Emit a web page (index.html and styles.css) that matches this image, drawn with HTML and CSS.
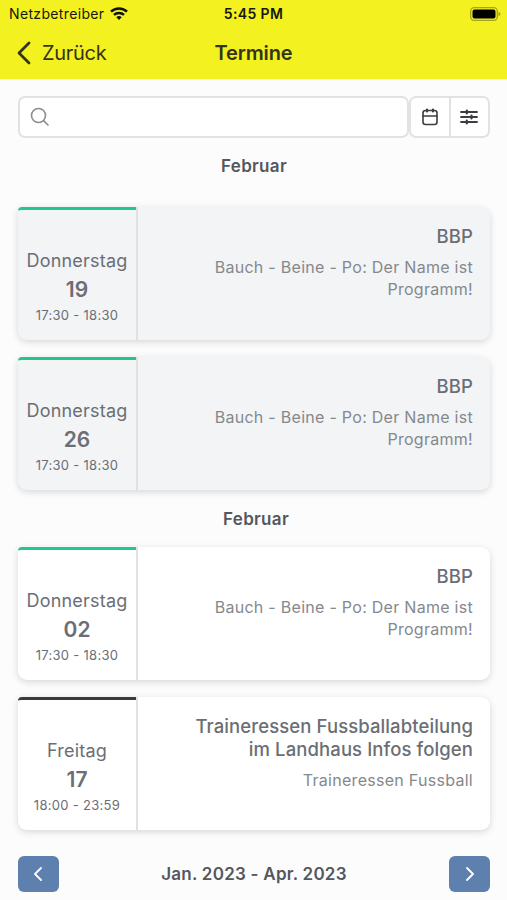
FILE: index.html
```html
<!doctype html>
<html lang="de">

<head>
    <meta charset="utf-8">
    <meta name="viewport" content="width=device-width, initial-scale=1, viewport-fit=cover">
    <title>Termine</title>
    <link rel="stylesheet" href="styles.css">
</head>

<body>
<header class="header">
    <div class="statusbar">
        <span class="carrier">
            <span class="carrier-name">Netzbetreiber</span>
            <svg class="wifi" width="18" height="13" viewBox="0 0 18 13" fill="none" stroke="#111" stroke-width="2.500">
                <path d="M1 4.700a11.500 11.500 0 0 1 16 0"/>
                <path d="M4 7.900a7.200 7.200 0 0 1 10 0"/>
                <path d="M9 13L6.300 10.300a3.900 3.900 0 0 1 5.400 0z" fill="#111" stroke="none"/>
            </svg>
        </span>
        <span class="clock">5:45 PM</span>
        <svg class="battery" width="31" height="14" viewBox="0 0 31 14">
            <rect x=".7" y=".7" width="26.600" height="12.600" rx="3.500" fill="none" stroke="#a5a31c" stroke-width="1.300"/>
            <rect x="2.500" y="2.500" width="23" height="9" rx="2" fill="#000"/>
            <path d="M28.500 4.800q2 1 2 2.200t-2 2.200z" fill="#a5a31c"/>
        </svg>
    </div>
    <nav class="navbar">
        <a class="back">
            <svg width="16" height="24" viewBox="0 0 16 24" fill="none" stroke="#34341a" stroke-width="2.800" stroke-linecap="round" stroke-linejoin="round">
                <path d="M13 2L3 12l10 10"/>
            </svg>
            <span class="back-label">Zurück</span>
        </a>
        <h1 class="title">Termine</h1>
    </nav>
</header>

<main class="content">
    <!-- Suche und Filter -->
    <div class="toolbar">
        <div class="search">
            <svg width="20" height="20" viewBox="0 0 20 20" fill="none" stroke="#8b8d90" stroke-width="1.600" stroke-linecap="round">
                <circle cx="8.500" cy="8.500" r="7"/>
                <path d="M13.600 13.600l4.400 4.400"/>
            </svg>
        </div>
        <div class="buttons">
            <button class="tool">
                <svg width="18" height="20" viewBox="0 0 18 20" fill="none" stroke="#3b3d40" stroke-width="1.600" stroke-linecap="round">
                    <rect x="2" y="3.500" width="14" height="14" rx="2.500"/>
                    <path d="M2 9h14"/>
                    <path d="M6 2.500v2M12 2.500v2" stroke-width="2.200"/>
                </svg>
            </button>
            <button class="tool">
                <svg width="18" height="16" viewBox="0 0 18 16" fill="none" stroke="#3b3d40" stroke-width="1.800" stroke-linecap="round">
                    <path d="M1 3h16M1 8h16M1 13h16"/>
                    <path d="M6.800 1.500v3M11.500 6.500v3M6.800 11.500v3" stroke-width="2.200"/>
                </svg>
            </button>
        </div>
    </div>

    <h2 class="month">Februar</h2>
    <article class="card past">
        <div class="date">
            <div class="weekday">Donnerstag</div>
            <div class="day">19</div>
            <div class="time">17:30 - 18:30</div>
        </div>
        <div class="info">
            <h3 class="name">BBP</h3>
            <p class="text">Bauch - Beine - Po: Der Name ist<br>Programm!</p>
        </div>
    </article>
    <article class="card past">
        <div class="date">
            <div class="weekday">Donnerstag</div>
            <div class="day">26</div>
            <div class="time">17:30 - 18:30</div>
        </div>
        <div class="info">
            <h3 class="name">BBP</h3>
            <p class="text">Bauch - Beine - Po: Der Name ist<br>Programm!</p>
        </div>
    </article>

    <h2 class="month month-next">Februar</h2>
    <article class="card">
        <div class="date">
            <div class="weekday">Donnerstag</div>
            <div class="day">02</div>
            <div class="time">17:30 - 18:30</div>
        </div>
        <div class="info">
            <h3 class="name">BBP</h3>
            <p class="text">Bauch - Beine - Po: Der Name ist<br>Programm!</p>
        </div>
    </article>
    <article class="card">
        <div class="date dark">
            <div class="weekday">Freitag</div>
            <div class="day">17</div>
            <div class="time">18:00 - 23:59</div>
        </div>
        <div class="info">
            <h3 class="name">Traineressen Fussballabteilung<br>im Landhaus Infos folgen</h3>
            <p class="text">Traineressen Fussball</p>
        </div>
    </article>

    <!-- Zeitraum wechseln -->
    <footer class="pager">
        <button class="page">
            <svg width="10" height="16" viewBox="0 0 10 16"><path d="M7 2L1 8l6 6"/></svg>
        </button>
        <span class="range">Jan. 2023 - Apr. 2023</span>
        <button class="page">
            <svg width="10" height="16" viewBox="0 0 10 16"><path d="M3 2l6 6-6 6"/></svg>
        </button>
    </footer>
</main>
</body>

</html>
```
FILE: styles.css
```css
* {
    box-sizing: border-box;
}

body {
    margin: 0;
    height: 900px;
    overflow: hidden;
    background-color: #fcfcfd;
    color: #6b6e74;
    font-family: Inter, "Liberation Sans", sans-serif;
}

h1, h2, h3, p {
    margin: 0;
}

svg {
    display: block;
}

button {
    display: flex;
    align-items: center;
    justify-content: center;
    padding: 0;
}

.header {
    height: 79px;
    background-color: #f3f120;
}

.statusbar {
    display: grid;
    grid-template-columns: 1fr auto 1fr;
    align-items: center;
    height: 27px;
    padding: 0 6px 0 9px;
    color: #17170a;
    font-size: 14px;
    letter-spacing: .35px;
}

.carrier {
    display: flex;
    align-items: center;
    gap: 6px;
}

.clock {
    margin-left: -3px;
    font-weight: 600;
}

.battery {
    justify-self: end;
}

.navbar {
    display: grid;
    grid-template-columns: 1fr auto 1fr;
    align-items: center;
    height: 51px;
    padding: 0 16px;
    color: #34341a;
}

.back {
    display: flex;
    align-items: center;
    gap: 10px;
    font-size: 20px;
    letter-spacing: -.3px;
}

.title {
    font-size: 20px;
    font-weight: 600;
    letter-spacing: -.15px;
}

.content {
    padding: 17px 17px 0 18px;
}

.toolbar {
    display: flex;
    height: 42px;
}

.search {
    display: flex;
    flex: 1;
    align-items: center;
    padding-left: 10px;
    border: 2px solid #e1e2e4;
    border-radius: 7px;
    background-color: #fff;
}

.buttons {
    display: flex;
    width: 81px;
    border: 2px solid #e1e2e4;
    border-radius: 7px;
    background-color: #fff;
}

.tool {
    flex: 1;
    border: 0;
    background: none;
}

.tool + .tool {
    border-left: 2px solid #e1e2e4;
}

.month {
    margin: 16px 0 29px;
    color: #54575d;
    font-size: 17px;
    font-weight: 600;
    line-height: 24px;
    letter-spacing: .3px;
    text-align: center;
}

.month-next {
    margin: 17px 0 16px;
    padding-left: 4px;
}

.card {
    display: flex;
    height: 133px;
    margin-bottom: 17px;
    border-radius: 4px 9px 9px 9px;
    background-color: #fff;
    box-shadow: 0 2px 7px rgba(0, 0, 0, .15);
}

.past {
    background-color: #f2f4f6;
}

.date {
    width: 118px;
    padding-top: 37px;
    border-top: 3px solid #21c78b;
    border-top-left-radius: 4px;
    text-align: center;
    white-space: nowrap;
}

.dark {
    border-top-color: #3a3b3d;
}

.weekday {
    font-size: 18px;
    line-height: 27px;
    letter-spacing: .2px;
}

.day {
    font-size: 21px;
    font-weight: 600;
    line-height: 32px;
}

.time {
    font-size: 13px;
    line-height: 18px;
    letter-spacing: .3px;
}

.info {
    flex: 1;
    padding: 18px 17px 0 0;
    border-left: 2px solid #dfe1e3;
    text-align: right;
}

.name {
    font-size: 18.5px;
    font-weight: 500;
    line-height: 23px;
    letter-spacing: .1px;
}

.text {
    margin-top: 8px;
    color: #85888d;
    font-size: 16px;
    line-height: 22px;
    letter-spacing: .28px;
}

.pager {
    display: flex;
    align-items: center;
    justify-content: space-between;
    margin-top: 26px;
}

.page {
    width: 41px;
    height: 36px;
    border: 0;
    border-radius: 6px;
    background-color: #5e80ae;
}

.page path {
    fill: none;
    stroke: #fff;
    stroke-width: 1.8;
    stroke-linecap: round;
    stroke-linejoin: round;
}

.range {
    color: #54575d;
    font-size: 17px;
    font-weight: 600;
    letter-spacing: .25px;
}
```
